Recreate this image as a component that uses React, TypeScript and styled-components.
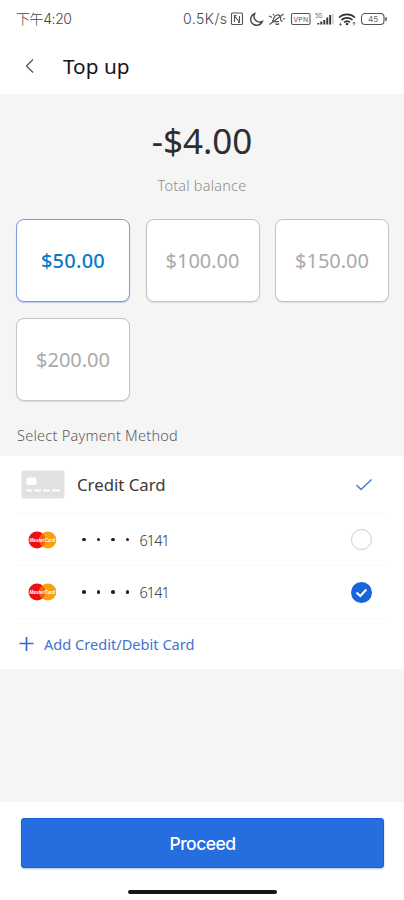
import React, { useState } from "react";
import styled, { createGlobalStyle } from "styled-components";

const GlobalStyle = createGlobalStyle`
  * { box-sizing: border-box; }
  body { margin: 0; background: #fff; }
  button { font: inherit; padding: 0; border: 0; background: none; }
`;

const Screen = styled.div`
  width: 404px;
  height: 900px;
  display: flex;
  flex-direction: column;
  background: #f5f5f5;
  font-family: "Noto Sans", "Noto Sans CJK SC", sans-serif;
  overflow: hidden;
  white-space: nowrap;
`;

const StatusBar = styled.div`
  height: 38px;
  padding: 0 16px;
  display: flex;
  align-items: center;
  justify-content: space-between;
  background: #fff;
  color: #444;
`;

const Clock = styled.span`
  padding-bottom: 3px;
  font: 300 14px "Inter", "Noto Sans CJK SC", sans-serif;
  letter-spacing: -0.4px;
`;

const StatusIcons = styled.div`
  display: flex;
  align-items: center;
`;

const Speed = styled.span`
  width: 47px;
  padding-bottom: 1px;
  font: 300 14px "Inter", sans-serif;
  letter-spacing: 0.5px;
`;

const Header = styled.header`
  height: 56px;
  padding: 0 24px 1px;
  display: flex;
  align-items: center;
  gap: 28px;
  background: #fff;
`;

const BackButton = styled.button`
  width: 11px;
  height: 16px;
  display: flex;
`;

const Title = styled.h1`
  margin: 0;
  font-size: 20.8px;
  font-weight: 450;
  line-height: 28px;
  color: #161616;
`;

const Balance = styled.section`
  height: 125px;
  padding-top: 24px;
  display: flex;
  flex-direction: column;
  align-items: center;
`;

const BalanceAmount = styled.div`
  font-size: 35px;
  line-height: 46px;
  font-weight: 400;
  color: #2e2e2e;
`;

const BalanceLabel = styled.div`
  margin-top: 10px;
  font-size: 14.5px;
  line-height: 22px;
  font-weight: 300;
  letter-spacing: 0.2px;
  color: #8f8f8f;
`;

const AmountGrid = styled.div`
  padding: 0 15px 0 16px;
  display: grid;
  grid-template-columns: repeat(3, 114px);
  grid-auto-rows: 83px;
  column-gap: 15.5px;
  row-gap: 16px;
`;

const AmountCard = styled.button<{ $selected: boolean }>`
  border: 1px solid ${(p) => (p.$selected ? "#7e9bdb" : "#c4c4c4")};
  border-radius: 8px;
  background: #fff;
  box-shadow: 0 1px 1px ${(p) => (p.$selected ? "#bccaea" : "#dcdcdc")};
  color: ${(p) => (p.$selected ? "#087bc5" : "#aaa")};
  font-size: 20px;
  font-weight: ${(p) => (p.$selected ? 500 : 400)};
  letter-spacing: ${(p) => (p.$selected ? "0.25px" : "0")};
`;

const SectionLabel = styled.h2`
  margin: 0;
  height: 55px;
  padding: 23px 17px 0;
  font-size: 14.5px;
  font-weight: 300;
  letter-spacing: 0.25px;
  line-height: 22px;
  color: #5c5c5c;
`;

const Methods = styled.section`
  height: 213px;
  padding: 0 19px 0 17px;
  background: #fff;
`;

const MethodRow = styled.div<{ $height: number }>`
  height: ${(p) => p.$height}px;
  display: flex;
  align-items: center;
  justify-content: space-between;
  border-bottom: 1px solid #f8f8f8;
`;

const MethodInfo = styled.div<{ $inset: number }>`
  display: flex;
  align-items: center;
  padding-left: ${(p) => p.$inset}px;
`;

const MethodName = styled.span`
  margin-left: 12px;
  font-size: 16.8px;
  color: #3a3a3a;
`;

const Dots = styled.div`
  margin: 0 10px 0 24px;
  display: flex;
  gap: 11px;
`;

const Dot = styled.i`
  width: 3.6px;
  height: 3.6px;
  border-radius: 50%;
  background: #222;
`;

const Digits = styled.span`
  font-size: 14.5px;
  font-weight: 300;
  color: #333;
  letter-spacing: -0.9px;
`;

const Radio = styled.button<{ $checked: boolean }>`
  width: 21px;
  height: 21px;
  margin-right: 13px;
  display: flex;
  border-radius: 50%;
  border: ${(p) => (p.$checked ? "0" : "1px solid #ccc")};
  background: ${(p) => (p.$checked ? "#1765de" : "#fff")};
`;

const AddCard = styled.button`
  height: 49px;
  padding-left: 2px;
  display: flex;
  align-items: center;
  gap: 9px;
  color: #3f73d4;
  font-size: 14.6px;
`;

const Spacer = styled.div`
  flex: 1;
`;

const Footer = styled.footer`
  height: 98px;
  padding: 16px 20px 0 21px;
  display: flex;
  flex-direction: column;
  align-items: center;
  background: #fff;
`;

const Proceed = styled.button`
  width: 363px;
  height: 50px;
  border-radius: 4px;
  background: #266de0;
  box-shadow: 0 1px 2px rgba(30, 60, 120, 0.35), inset 0 0 0 1px #1762d9;
  color: #fff;
  font: 500 17.5px "Inter", sans-serif;
  letter-spacing: -0.55px;
`;

const HomeIndicator = styled.div`
  width: 149px;
  height: 4px;
  margin-top: 22px;
  border-radius: 2px;
  background: #161616;
`;

const SystemIcons = () => (
  <svg width="158" height="16" viewBox="0 0 158 16" fill="none" stroke="#555" strokeWidth="1.1">
    <rect x="1.5" y="2" width="11" height="11.500" rx="1" />
    <path d="M4.5 11V5l5 6V5M4.5 4.5h2M8 11.5h2" />
    <path d="M24.7 2.6a6 6 0 1 0 7.6 7.8 5.7 5.7 0 0 1-7.6-7.8Z" strokeWidth="1.4" stroke="#444" />
    <path d="M42 10.5c2-1 1.3-6 5-6.5 3-.4 4 2 3.500 4.200-.2 1.500.8 2 2 2.500M42 10.500h7M45.500 12.500c1 1.300 2.500 1.300 3.500 0M39.500 13.500 53.500 3M39 5l3 1.500M53 8l2-.5M43 3l1 1.500" strokeWidth="1.250" />
    <rect x="61.500" y="2.500" width="18.500" height="11" rx="1.500" />
    <text x="63.500" y="10.600" fontSize="6.800" fontFamily="Inter" stroke="none" fill="#555" textLength="14.500">VPN</text>
    <text x="85" y="6.500" fontSize="5.500" fontFamily="Inter" stroke="none" fill="#555">5G</text>
    <path d="M88.300 13.500v-1.500M91.300 13.500v-3M94.300 13.500V9M97.300 13.500V6.500M100.200 13.500V4" stroke="#333" strokeWidth="1.900" />
    <path d="M103 13.500V3" stroke="#bbb" />
    <path d="M109 6.500c4.500-4.200 11.500-4.200 16 0M111.500 9c3.200-2.800 8-2.800 11 0M114 11.300c1.800-1.500 4.300-1.500 6 0" stroke="#333" strokeWidth="1.700" />
    <circle cx="117" cy="13" r="1.300" fill="#333" stroke="none" />
    <path d="M110.500 11.500v3M109.300 13l1.200 1.500 1.200-1.500M124 14.500v-3.500M122.800 12.500l1.200-1.500 1.200 1.500" strokeWidth=".8" />
    <rect x="131.500" y="2.500" width="22.500" height="11" rx="3.500" />
    <path d="M156 6.200v3.600" strokeWidth="1.600" />
    <text x="138" y="11" fontSize="8" fontFamily="Inter" stroke="none" fill="#666" textLength="10">45</text>
  </svg>
);

const BackIcon = () => (
  <svg width="11" height="16" viewBox="0 0 11 16" fill="none" stroke="#555" strokeWidth="1.3">
    <path d="M9 1.500 2.500 8 9 14.500" />
  </svg>
);

const CreditCardIcon = () => (
  <svg width="44" height="29" viewBox="0 0 44 29">
    <rect x=".5" y=".5" width="43" height="28" rx="2" fill="#e1e1e1" />
    <rect x="5.500" y="7.500" width="10" height="7.500" rx="1.500" fill="#fff" />
    <path d="M5 20.500h6M13 20.500h7M22 20.500h7M31 20.500h8" stroke="#fff" strokeWidth="2.200" />
  </svg>
);

const MastercardSvg = styled.svg`
  overflow: visible;
`;

const MastercardIcon = () => (
  <MastercardSvg width="30" height="18" viewBox="0 0 30 18">
    <circle cx="9" cy="9" r="8.500" fill="#ee1010" />
    <circle cx="19.800" cy="9" r="8.500" fill="#fb9f0b" />
    <path d="M14.400 2.400a8.500 8.500 0 0 1 0 13.200 8.500 8.500 0 0 1 0-13.200" fill="#f4600e" />
    <text x="1.500" y="11" fontSize="5" fontFamily="Liberation Sans" fontWeight="700" fontStyle="italic" fill="#fff" textLength="25.500" lengthAdjust="spacingAndGlyphs">MasterCard</text>
  </MastercardSvg>
);

const TickIcon = () => (
  <svg width="18" height="14" viewBox="0 0 18 14" fill="none" stroke="#4479d4" strokeWidth="1.500">
    <path d="M1.500 7 6 11.500 16.500 1.500" />
  </svg>
);

const TickBox = styled.div`
  display: flex;
  margin-right: 12px;
`;

const PlusIcon = () => (
  <svg width="16" height="16" viewBox="0 0 16 16" stroke="#3269d0" strokeWidth="1.700">
    <path d="M.5 7.500h14M7.500 1v14" />
  </svg>
);

const amounts = ["$50.00", "$100.00", "$150.00", "$200.00"];
const cards = ["6141", "6141"];

export default function App() {
  const [amount, setAmount] = useState(0);
  const [card, setCard] = useState(1);

  return (
    <>
      <GlobalStyle />
      <Screen>
        <StatusBar>
          <Clock>下午4:20</Clock>
          <StatusIcons>
            <Speed>0.5K/s</Speed>
            <SystemIcons />
          </StatusIcons>
        </StatusBar>
        <Header>
          <BackButton aria-label="Back"><BackIcon /></BackButton>
          <Title>Top up</Title>
        </Header>
        <Balance>
          <BalanceAmount>-$4.00</BalanceAmount>
          <BalanceLabel>Total balance</BalanceLabel>
        </Balance>
        <AmountGrid>
          {amounts.map((value, i) => (
            <AmountCard key={value} $selected={i === amount} onClick={() => setAmount(i)}>
              {value}
            </AmountCard>
          ))}
        </AmountGrid>
        <SectionLabel>Select Payment Method</SectionLabel>
        <Methods>
          <MethodRow $height={58}>
            <MethodInfo $inset={4}>
              <CreditCardIcon />
              <MethodName>Credit Card</MethodName>
            </MethodInfo>
            <TickBox><TickIcon /></TickBox>
          </MethodRow>
          {cards.map((digits, i) => (
            <MethodRow key={i} $height={i === 0 ? 52 : 53}>
              <MethodInfo $inset={11}>
                <MastercardIcon />
                <Dots><Dot /><Dot /><Dot /><Dot /></Dots>
                <Digits>{digits}</Digits>
              </MethodInfo>
              <Radio $checked={i === card} aria-label={`Card ${i + 1}`} onClick={() => setCard(i)}>
                {i === card && (
                  <svg width="21" height="21" viewBox="0 0 21 21" fill="none" stroke="#fff" strokeWidth="2">
                    <path d="m5.500 10.500 3.800 3.500 6-6.500" />
                  </svg>
                )}
              </Radio>
            </MethodRow>
          ))}
          <AddCard><PlusIcon />Add Credit/Debit Card</AddCard>
        </Methods>
        <Spacer />
        <Footer>
          <Proceed>Proceed</Proceed>
          <HomeIndicator />
        </Footer>
      </Screen>
    </>
  );
}
